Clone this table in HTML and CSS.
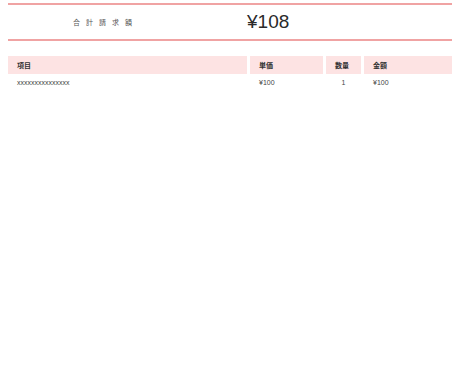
FILE: index.html
```html
<!DOCTYPE html>
<html lang="ja">
<head>
<meta charset="utf-8">
<title>請求書</title>
<link rel="stylesheet" href="styles.css">
</head>
<body>
<div class="page">
  <div class="summary">
    <div class="summary-label">合計請求額</div>
    <div class="summary-amount">¥108</div>
  </div>
  <div class="items">
    <div class="cell head">項目</div>
    <div class="cell head">単価</div>
    <div class="cell head">数量</div>
    <div class="cell head">金額</div>
    <div class="cell">xxxxxxxxxxxxxxx</div>
    <div class="cell">¥100</div>
    <div class="cell qty">1</div>
    <div class="cell">¥100</div>
  </div>
</div>
</body>
</html>
```

FILE: styles.css
```css
html, body {
  margin: 0;
  background: #fff;
}

body {
  font-family: "Noto Sans CJK JP", "Liberation Sans", sans-serif;
  color: #333;
}

.page {
  padding: 3px 8px;
}

/* total amount band */
.summary {
  display: flex;
  align-items: center;
  height: 34px;
  border-top: 2px solid #f0a3a3;
  border-bottom: 2px solid #f0a3a3;
}

.summary-label {
  width: 189px;
  text-align: center;
  font-size: 7px;
  letter-spacing: 6px;
  text-indent: 6px;
  color: #555;
}

.summary-amount {
  padding-left: 50px;
  font-family: "Liberation Sans", sans-serif;
  font-size: 19px;
  color: #2a2a2a;
}

/* line items */
.items {
  margin-top: 15px;
  display: grid;
  grid-template-columns: 239px 73px 35px 88px;
  column-gap: 3px;
}

.cell {
  padding-left: 9px;
  height: 16px;
  display: flex;
  align-items: center;
  font-family: "Liberation Sans", sans-serif;
  font-size: 7px;
  color: #444;
}

.cell.head {
  height: 18px;
  padding-bottom: 1px;
  box-sizing: border-box;
  background: #fde3e3;
  font-family: "Noto Sans CJK JP", sans-serif;
  font-size: 7px;
  font-weight: bold;
  color: #333;
}

.cell.qty {
  justify-content: center;
  padding-left: 0;
}
```
